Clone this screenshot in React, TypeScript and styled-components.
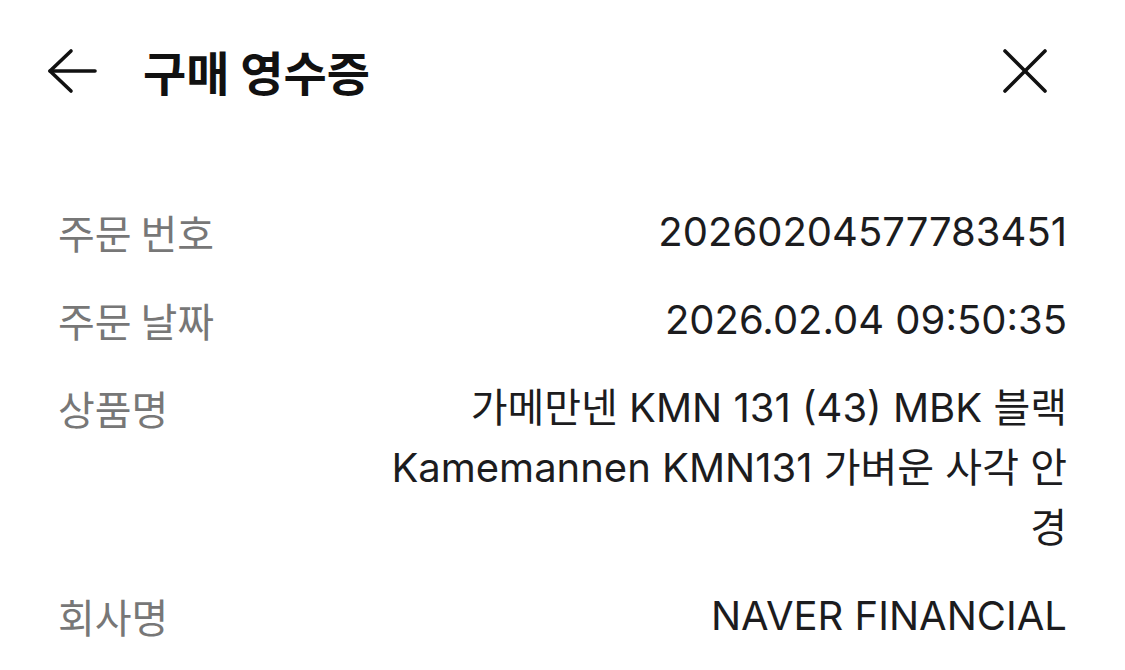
import React from "react";
import styled, { createGlobalStyle } from "styled-components";

const Global = createGlobalStyle`
  html, body { margin: 0; padding: 0; background: #ffffff; }
  body { font-family: Inter, "Noto Sans CJK KR", "Noto Sans", sans-serif; }
`;

const Page = styled.div`
  width: 1125px;
  height: 670px;
  overflow: hidden;
  background: #ffffff;
`;

const Header = styled.header`
  height: 146px;
  display: flex;
  align-items: center;
  padding: 0 77px 4px 46px;
  box-sizing: border-box;
`;

const IconButton = styled.button`
  border: 0;
  background: transparent;
  padding: 0;
  display: flex;
  align-items: center;
  justify-content: center;
  color: #111111;
  cursor: pointer;
`;

const Title = styled.h1`
  margin: 0 0 0 45px;
  flex: 1;
  font-family: "Noto Sans CJK KR", sans-serif;
  font-weight: 700;
  font-size: 47px;
  line-height: 60px;
  color: #111111;
`;

const List = styled.dl`
  margin: 0;
  padding: 42px 58px 0 58px;
`;

const Row = styled.div`
  display: flex;
  justify-content: space-between;
  align-items: flex-start;
  padding: 14px 0;
  line-height: 60px;
`;

const Label = styled.dt`
  margin: 0;
  font-family: "Noto Sans CJK KR", sans-serif;
  font-size: 40px;
  color: #777777;
  white-space: nowrap;
`;

const Value = styled.dd`
  margin: 0;
  max-width: 700px;
  text-align: right;
  font-size: 40px;
  color: #1c1c1e;
`;

const rows: { label: string; value: string }[] = [
  { label: "주문 번호", value: "20260204577783451" },
  { label: "주문 날짜", value: "2026.02.04 09:50:35" },
  { label: "상품명", value: "가메만넨 KMN 131 (43) MBK 블랙 Kamemannen KMN131 가벼운 사각 안경" },
  { label: "회사명", value: "NAVER FINANCIAL" },
];

export default function App() {
  return (
    <Page>
      <Global />
      <Header>
        <IconButton aria-label="back">
          <svg width="52" height="46" viewBox="0 0 52 46" fill="none" stroke="currentColor" strokeWidth="3.6" strokeLinecap="round" strokeLinejoin="round">
            <path d="M49 23H4" />
            <path d="M25 3L4 23L25 43" />
          </svg>
        </IconButton>
        <Title>구매 영수증</Title>
        <IconButton aria-label="close">
          <svg width="46" height="46" viewBox="0 0 46 46" fill="none" stroke="currentColor" strokeWidth="3.6" strokeLinecap="round">
            <path d="M3 3L43 43" />
            <path d="M43 3L3 43" />
          </svg>
        </IconButton>
      </Header>
      <List>
        {rows.map((r) => (
          <Row key={r.label}>
            <Label>{r.label}</Label>
            <Value>{r.value}</Value>
          </Row>
        ))}
      </List>
    </Page>
  );
}
